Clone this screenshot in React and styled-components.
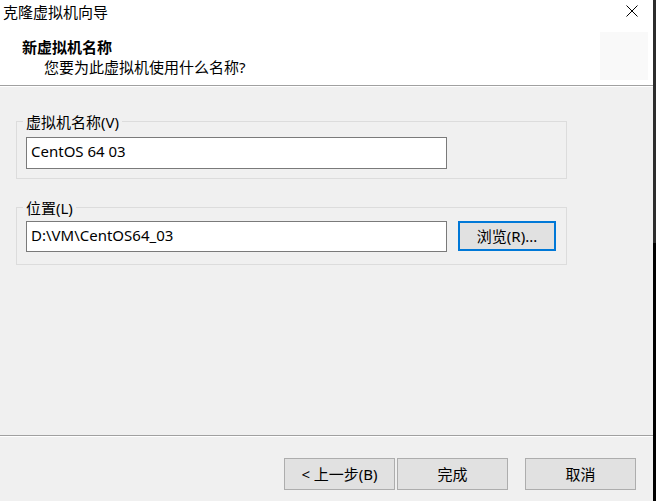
import React from 'react';
import styled, { createGlobalStyle } from 'styled-components';

const GlobalStyle = createGlobalStyle`
  html, body {
    margin: 0;
    padding: 0;
    background: #f0f0f0;
  }
  body {
    font-family: 'Noto Sans', 'Noto Sans CJK SC', sans-serif;
    font-size: 15px;
    color: #000;
  }
  * {
    box-sizing: border-box;
  }
`;

const Window = styled.div`
  display: flex;
  width: 656px;
  height: 501px;
  overflow: hidden;
`;

const Main = styled.div`
  flex: 1;
  display: flex;
  flex-direction: column;
  background: #f0f0f0;
`;

const Edge = styled.div`
  width: 3px;
  background: linear-gradient(#2d2d2d 0, #2d2d2d 243px, #000 243px);
`;

const Header = styled.div`
  height: 85px;
  background: #fff;
  display: flex;
  flex-direction: column;
`;

const TitleBar = styled.div`
  height: 27px;
  display: flex;
  justify-content: space-between;
  align-items: flex-start;
  padding: 2px 0 0 3px;
  line-height: 20px;
`;

const CloseButton = styled.div`
  width: 12px;
  height: 12px;
  margin: 3px 15px 0 0;
  display: flex;
`;

const Banner = styled.div`
  flex: 1;
  display: flex;
  justify-content: space-between;
`;

const BannerText = styled.div`
  padding-top: 10px;
  line-height: 20px;
`;

const PageTitle = styled.div`
  font-weight: bold;
  margin-left: 22px;
`;

const PageSubtitle = styled.div`
  margin-left: 44px;
`;

const IconBox = styled.div`
  width: 48px;
  height: 48px;
  margin: 5px 5px 0 0;
  background: #f9f9f9;
`;

const Separator = styled.div`
  height: 2px;
  border-top: 1px solid #a0a0a0;
  border-bottom: 1px solid #fff;
`;

const Body = styled.div`
  flex: 1;
  display: flex;
  flex-direction: column;
  padding-left: 16px;
`;

const Group = styled.div`
  width: 551px;
  height: 58px;
  margin-top: ${p => p.$top}px;
  border: 1px solid #dcdcdc;
  padding: 0 9px;
  display: flex;
  flex-direction: column;
  align-items: flex-start;
`;

const Legend = styled.span`
  display: block;
  margin: -10px 0 0 -3px;
  padding: 0 3px;
  background: #f0f0f0;
  line-height: 20px;
`;

const Row = styled.div`
  display: flex;
  align-items: flex-start;
  margin-top: ${p => p.$offset}px;
`;

const TextBox = styled.div`
  width: 421px;
  height: ${p => p.$height}px;
  background: #fff;
  border: 1px solid #7a7a7a;
  padding: 3px 0 0 4px;
  line-height: 20px;
  white-space: nowrap;
`;

const Button = styled.div`
  display: flex;
  align-items: center;
  justify-content: center;
  width: ${p => p.$width}px;
  height: ${p => p.$height}px;
  background: #e1e1e1;
  border: ${p => (p.$focused ? '2px solid #0078d7' : '1px solid #adadad')};
  line-height: 20px;
  white-space: nowrap;
`;

const BrowseButton = styled(Button)`
  margin-left: 11px;
`;

const Footer = styled.div`
  height: 64px;
  display: flex;
  justify-content: flex-end;
  padding: 21px 17px 0 0;
`;

const ButtonGap = styled.div`
  width: ${p => p.$width}px;
`;

export default function App() {
  return (
    <Window>
      <GlobalStyle />
      <Main>
        <Header>
          <TitleBar>
            <span>克隆虚拟机向导</span>
            <CloseButton>
              <svg width="12" height="12" viewBox="0 0 12 12">
                <path d="M0.5 0.5 L11.5 11.5 M11.5 0.5 L0.5 11.5" stroke="#000" strokeWidth="1" fill="none" />
              </svg>
            </CloseButton>
          </TitleBar>
          <Banner>
            <BannerText>
              <PageTitle>新虚拟机名称</PageTitle>
              <PageSubtitle>您要为此虚拟机使用什么名称?</PageSubtitle>
            </BannerText>
            <IconBox />
          </Banner>
        </Header>
        <Separator />
        <Body>
          <Group $top={34}>
            <Legend>虚拟机名称(V)</Legend>
            <Row $offset={5}>
              <TextBox $height={32}>CentOS 64 03</TextBox>
            </Row>
          </Group>
          <Group $top={28}>
            <Legend>位置(L)</Legend>
            <Row $offset={3}>
              <TextBox $height={31}>D:\VM\CentOS64_03</TextBox>
              <BrowseButton $width={98} $height={30} $focused>浏览(R)...</BrowseButton>
            </Row>
          </Group>
        </Body>
        <Separator />
        <Footer>
          <Button $width={111} $height={32}>&lt; 上一步(B)</Button>
          <ButtonGap $width={2} />
          <Button $width={111} $height={32}>完成</Button>
          <ButtonGap $width={17} />
          <Button $width={111} $height={32}>取消</Button>
        </Footer>
      </Main>
      <Edge />
    </Window>
  );
}
